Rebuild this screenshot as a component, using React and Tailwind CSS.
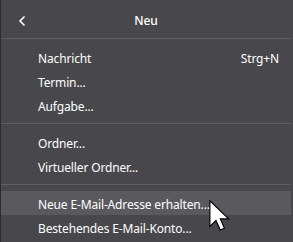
import { ChevronLeft } from "lucide-react";

const sections = [
  [
    { label: "Nachricht", shortcut: "Strg+N" },
    { label: "Termin..." },
    { label: "Aufgabe..." },
  ],
  [{ label: "Ordner..." }, { label: "Virtueller Ordner..." }],
  [
    { label: "Neue E-Mail-Adresse erhalten...", hover: true },
    { label: "Bestehendes E-Mail-Konto..." },
  ],
];

export default function App() {
  return (
    <div
      className="relative w-[293px] h-[242px] overflow-hidden bg-[#48474c] border-l border-[#2c2c2f] text-white text-[12px] tracking-[-0.15px]"
      style={{ fontFamily: '"Noto Sans", "Open Sans", sans-serif' }}
    >
      {/* Header */}
      <div className="relative h-[39px] flex items-center justify-center border-b border-[#5f5e63] mr-[2px] pt-[4px]">
        <ChevronLeft size={16} strokeWidth={2.5} className="absolute left-[13px] top-[13px] text-white" />
        <span className="font-medium text-[12px]">Neu</span>
      </div>

      {sections.map((items, i) => (
        <div
          key={i}
          className={`pt-[6px] pb-[6px] mr-[2px] ${i < sections.length - 1 ? "border-b border-[#5f5e63]" : ""}`}
        >
          {items.map((item) => (
            <div
              key={item.label}
              className={`h-[24px] flex items-center justify-between pl-[37px] pr-[12px] pt-[3px] ${item.hover ? "bg-[#5a595e]" : ""}`}
            >
              <span>{item.label}</span>
              {item.shortcut && <span>{item.shortcut}</span>}
            </div>
          ))}
        </div>
      ))}

      {/* mouse cursor */}
      <svg
        className="absolute left-[208px] top-[200px]"
        width="21"
        height="32"
        viewBox="0 0 13 20"
      >
        <path
          d="M0.5 0.5 L0.5 16.5 L4.3 12.8 L7 18.8 L9.6 17.7 L7 11.8 L12.2 11.8 Z"
          fill="#fff"
          stroke="#000"
          strokeWidth="0.7"
          strokeLinejoin="miter"
        />
      </svg>
    </div>
  );
}
